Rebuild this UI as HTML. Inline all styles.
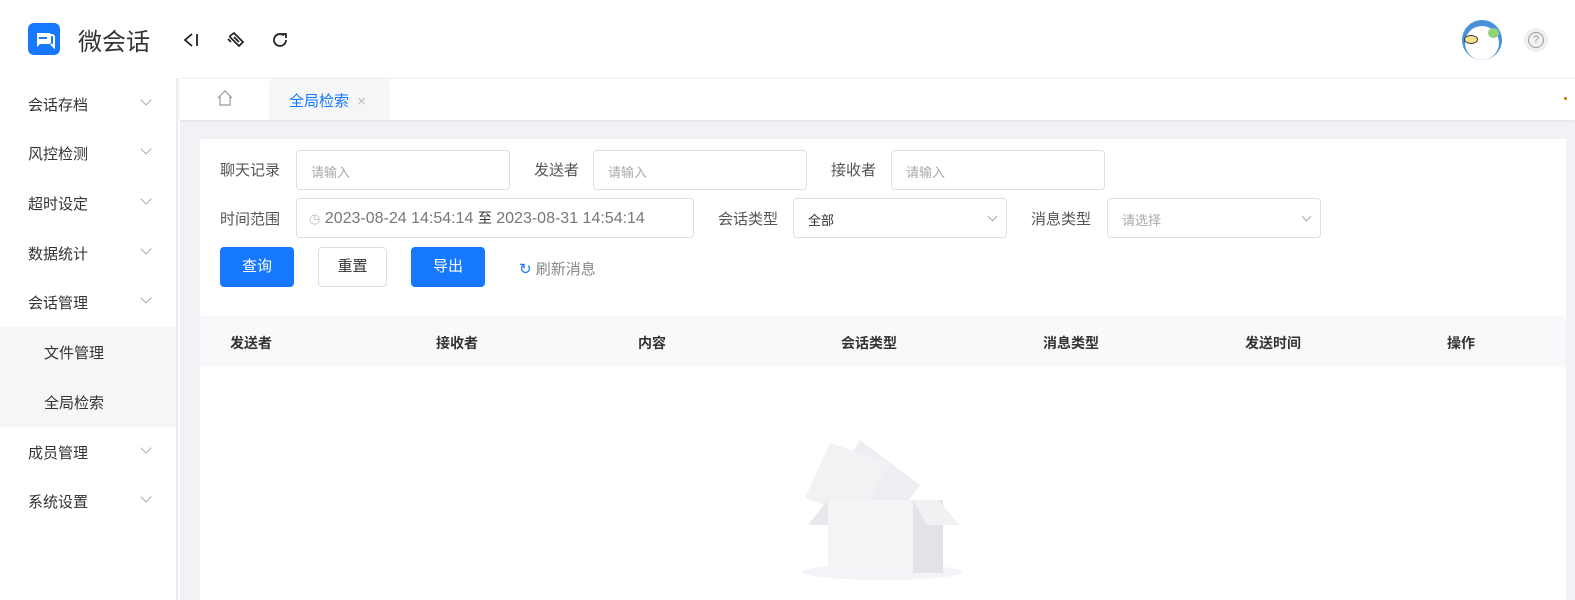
<!DOCTYPE html>
<html><head><meta charset="utf-8"><style>
*{box-sizing:border-box;margin:0;padding:0}
body{width:1575px;height:600px;overflow:hidden;background:#fff;font-family:"Liberation Sans","Noto Sans CJK SC",sans-serif;color:#333;position:relative}
.abs{position:absolute}
.hdr{left:0;top:0;width:1575px;height:78px;background:#fff}
.logo{left:28px;top:23px;width:32px;height:32px;background:#1677ff;border-radius:6px}
.title{left:78px;top:22px;font-size:24px;color:#333}
.side{left:0;top:78px;width:178px;height:522px;background:#fff;border-right:2px solid #eaecf0}
.mi{position:absolute;left:28px;font-size:15px;color:#333}
.chev{position:absolute;left:142px;width:8px;height:8px;border-right:1px solid #aaa;border-bottom:1px solid #aaa;transform:rotate(45deg)}
.sub{position:absolute;left:0;top:249px;width:176px;height:100px;background:#f5f6f8}
.main{left:180px;top:120px;width:1395px;height:480px;background:#f0f2f5}
.tabs{left:180px;top:78px;width:1395px;height:42px;background:#fff;border-top:1px solid #eee;box-shadow:0 1px 3px rgba(0,0,0,.08)}
.tab{left:269px;top:79px;width:121px;height:41px;background:#f5f6f8;border-radius:6px 6px 0 0;color:#1677ff;font-size:15px;padding:11px 0 0 20px}
.card{left:200px;top:139px;width:1366px;height:461px;background:#fff}
.lbl{position:absolute;font-size:15px;color:#555}
.inp{position:absolute;height:40px;border:1px solid #dcdfe6;border-radius:4px;font-size:13px;color:#aaa;padding:11px 14px}
.btn{position:absolute;top:247px;height:40px;border-radius:4px;font-size:15px;text-align:center;line-height:40px}
.th{position:absolute;top:333px;font-size:14px;font-weight:bold;color:#333}
.dd{position:absolute;right:10px;top:14px;width:7px;height:7px;border-right:1px solid #aaa;border-bottom:1px solid #aaa;transform:rotate(45deg)}
</style></head><body>
<div class="abs hdr"></div>
<div class="abs logo"><svg width="32" height="32" viewBox="0 0 32 32"><path d="M9 10h12a2 2 0 0 1 2 2v7a2 2 0 0 1-2 2H12l-3 3z" fill="#fff"/><rect x="11" y="14" width="8" height="2" fill="#1677ff"/><path d="M23 12h1a2 2 0 0 1 2 2v10l-3-3" fill="none" stroke="#fff" stroke-width="2"/></svg></div>
<div class="abs title">微会话</div>
<svg class="abs" style="left:182px;top:31px" width="18" height="18" viewBox="0 0 18 18"><path d="M10 3L3 9l7 6M15 3v12" fill="none" stroke="#222" stroke-width="1.8"/></svg>
<svg class="abs" style="left:226px;top:30px" width="20" height="20" viewBox="0 0 20 20"><path d="M4 6l4-3 9 9-4 4-9-9zM8 7l5 5M2 9l3 3" fill="none" stroke="#222" stroke-width="1.7"/></svg>
<svg class="abs" style="left:271px;top:31px" width="18" height="18" viewBox="0 0 18 18"><path d="M15 9a6 6 0 1 1-2-4.5" fill="none" stroke="#222" stroke-width="1.8"/><path d="M11 3h4v4" fill="none" stroke="#222" stroke-width="1.8"/></svg>
<div class="abs" style="left:1462px;top:20px;width:40px;height:40px;border-radius:50%;background:#4a90d9;overflow:hidden"><div style="position:absolute;left:3px;top:6px;width:34px;height:34px;border-radius:50%;background:#fff"></div><div style="position:absolute;left:2px;top:15px;width:14px;height:9px;border-radius:50%;background:#f3e28a;border:1px solid #333"></div><div style="position:absolute;left:26px;top:8px;width:11px;height:10px;border-radius:50%;background:#8fd37a"></div></div>
<div class="abs" style="left:1524px;top:28px;width:24px;height:24px;border-radius:50%;background:#f0f1f3"><div style="position:absolute;left:4px;top:4px;width:16px;height:16px;border-radius:50%;border:1px solid #999;font-size:11px;color:#999;text-align:center;line-height:14px">?</div></div>

<div class="abs side">
<div class="sub"></div>
<div class="mi" style="top:16px">会话存档</div><div class="chev" style="top:18px"></div>
<div class="mi" style="top:65px">风控检测</div><div class="chev" style="top:67px"></div>
<div class="mi" style="top:115px">超时设定</div><div class="chev" style="top:117px"></div>
<div class="mi" style="top:165px">数据统计</div><div class="chev" style="top:167px"></div>
<div class="mi" style="top:214px">会话管理</div><div class="chev" style="top:216px"></div>
<div class="mi" style="top:264px;left:44px">文件管理</div>
<div class="mi" style="top:314px;left:44px">全局检索</div>
<div class="mi" style="top:364px">成员管理</div><div class="chev" style="top:366px"></div>
<div class="mi" style="top:413px">系统设置</div><div class="chev" style="top:415px"></div>
</div>
<div class="abs main"></div>
<div class="abs tabs"></div>
<svg class="abs" style="left:216px;top:90px" width="18" height="16" viewBox="0 0 18 16"><path d="M2 8L9 1l7 7M4 6v9h10V6" fill="none" stroke="#999" stroke-width="1.2"/></svg>
<div class="abs tab">全局检索 <span style="color:#bbb;margin-left:4px">×</span></div>
<div class="abs card">
<div class="lbl" style="left:20px;top:20px">聊天记录</div>
<div class="inp" style="left:96px;top:11px;width:214px">请输入</div>
<div class="lbl" style="left:334px;top:20px">发送者</div>
<div class="inp" style="left:393px;top:11px;width:214px">请输入</div>
<div class="lbl" style="left:631px;top:20px">接收者</div>
<div class="inp" style="left:691px;top:11px;width:214px">请输入</div>
<div class="lbl" style="left:20px;top:69px">时间范围</div>
<div class="inp" style="left:96px;top:59px;width:398px;font-size:16px;color:#777;padding:9px 12px"><span style="color:#bbb;font-size:13px">◷</span> 2023-08-24 14:54:14 <span style="color:#333;font-size:14px">至</span> 2023-08-31 14:54:14</div>
<div class="lbl" style="left:518px;top:69px">会话类型</div>
<div class="inp" style="left:593px;top:59px;width:214px;color:#333">全部<div class="dd"></div></div>
<div class="lbl" style="left:831px;top:69px">消息类型</div>
<div class="inp" style="left:907px;top:59px;width:214px">请选择<div class="dd"></div></div>
</div>
<div class="btn" style="left:220px;width:74px;background:#1677ff;color:#fff">查询</div>
<div class="btn" style="left:318px;width:69px;border:1px solid #dcdfe6;color:#333;line-height:38px">重置</div>
<div class="btn" style="left:411px;width:74px;background:#1677ff;color:#fff">导出</div>
<div class="abs" style="left:519px;top:258px;font-size:15px;color:#888"><span style="color:#1677ff">↻</span> 刷新消息</div>
<div class="abs" style="left:200px;top:316px;width:1366px;height:51px;background:#f8f9fb"></div>
<div class="th" style="left:230px">发送者</div>
<div class="th" style="left:436px">接收者</div>
<div class="th" style="left:638px">内容</div>
<div class="th" style="left:841px">会话类型</div>
<div class="th" style="left:1043px">消息类型</div>
<div class="th" style="left:1245px">发送时间</div>
<div class="th" style="left:1447px">操作</div>
<svg class="abs" style="left:800px;top:420px" width="165" height="165" viewBox="0 0 165 165">
<ellipse cx="82" cy="152" rx="80" ry="8" fill="#f3f4f7"/>
<path d="M30 70l30 -50 60 45 -25 35z" fill="#eceef1"/>
<path d="M5 78L30 23l60 20-30 55z" fill="#f1f2f4"/>
<path d="M8 105l20-25v25z" fill="#e8e9ec"/>
<rect x="28" y="80" width="85" height="73" fill="#f3f4f6"/>
<path d="M113 80h30v73h-30z" fill="#e1e3e8"/>
<path d="M113 80h25l22 25h-33z" fill="#f0f1f3"/>
</svg>
<div class="abs" style="left:1564px;top:97px;width:3px;height:3px;background:#c70;border-radius:50%"></div>
</body></html>
